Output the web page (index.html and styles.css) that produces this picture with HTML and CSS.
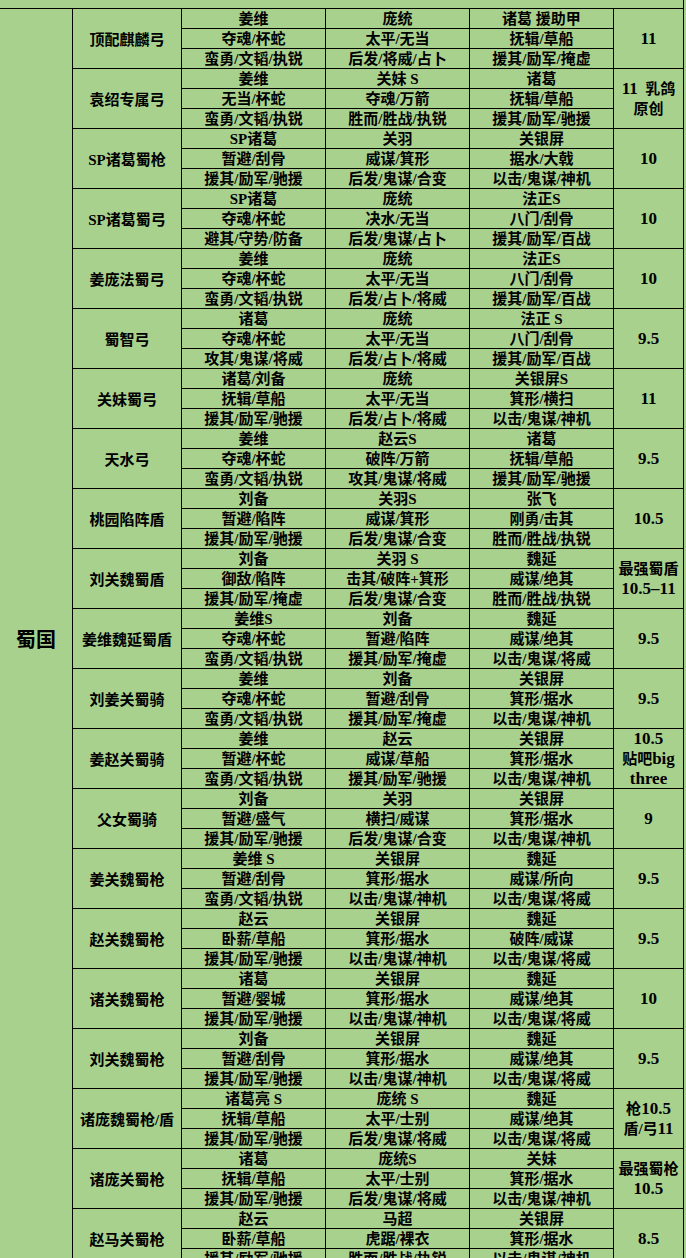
FILE: index.html
```html
<!DOCTYPE html>
<html lang="zh">
<head>
<meta charset="utf-8">
<title>蜀国阵容</title>
<link rel="stylesheet" href="styles.css">
</head>
<body>
<div class="sheet">
<div class="top"></div>
<div class="r">蜀国</div>

<div class="n">顶配麒麟弓</div>
<div class="c">姜维</div><div class="c">庞统</div><div class="c">诸葛 援助甲</div>
<div class="s"><p class="sv"><span class="num">11</span></p></div>
<div class="c">夺魂/杯蛇</div><div class="c">太平/无当</div><div class="c">抚辑/草船</div>
<div class="c">蛮勇/文韬/执锐</div><div class="c">后发/将威/占卜</div><div class="c">援其/励军/掩虚</div>

<div class="n">袁绍专属弓</div>
<div class="c">姜维</div><div class="c">关妹 S</div><div class="c">诸葛</div>
<div class="s"><p class="sv"><span class="num">11</span>&nbsp; 乳鸽<br>原创</p></div>
<div class="c">无当/杯蛇</div><div class="c">夺魂/万箭</div><div class="c">抚辑/草船</div>
<div class="c">蛮勇/文韬/执锐</div><div class="c">胜而/胜战/执锐</div><div class="c">援其/励军/驰援</div>

<div class="n">SP诸葛蜀枪</div>
<div class="c">SP诸葛</div><div class="c">关羽</div><div class="c">关银屏</div>
<div class="s"><p class="sv"><span class="num">10</span></p></div>
<div class="c">暂避/刮骨</div><div class="c">威谋/箕形</div><div class="c">据水/大戟</div>
<div class="c">援其/励军/驰援</div><div class="c">后发/鬼谋/合变</div><div class="c">以击/鬼谋/神机</div>

<div class="n">SP诸葛蜀弓</div>
<div class="c">SP诸葛</div><div class="c">庞统</div><div class="c">法正S</div>
<div class="s"><p class="sv"><span class="num">10</span></p></div>
<div class="c">夺魂/杯蛇</div><div class="c">决水/无当</div><div class="c">八门/刮骨</div>
<div class="c">避其/守势/防备</div><div class="c">后发/鬼谋/占卜</div><div class="c">援其/励军/百战</div>

<div class="n">姜庞法蜀弓</div>
<div class="c">姜维</div><div class="c">庞统</div><div class="c">法正S</div>
<div class="s"><p class="sv"><span class="num">10</span></p></div>
<div class="c">夺魂/杯蛇</div><div class="c">太平/无当</div><div class="c">八门/刮骨</div>
<div class="c">蛮勇/文韬/执锐</div><div class="c">后发/占卜/将威</div><div class="c">援其/励军/百战</div>

<div class="n">蜀智弓</div>
<div class="c">诸葛</div><div class="c">庞统</div><div class="c">法正 S</div>
<div class="s"><p class="sv"><span class="num">9.5</span></p></div>
<div class="c">夺魂/杯蛇</div><div class="c">太平/无当</div><div class="c">八门/刮骨</div>
<div class="c">攻其/鬼谋/将威</div><div class="c">后发/占卜/将威</div><div class="c">援其/励军/百战</div>

<div class="n">关妹蜀弓</div>
<div class="c">诸葛/刘备</div><div class="c">庞统</div><div class="c">关银屏S</div>
<div class="s"><p class="sv"><span class="num">11</span></p></div>
<div class="c">抚辑/草船</div><div class="c">太平/无当</div><div class="c">箕形/横扫</div>
<div class="c">援其/励军/驰援</div><div class="c">后发/占卜/将威</div><div class="c">以击/鬼谋/神机</div>

<div class="n">天水弓</div>
<div class="c">姜维</div><div class="c">赵云S</div><div class="c">诸葛</div>
<div class="s"><p class="sv"><span class="num">9.5</span></p></div>
<div class="c">夺魂/杯蛇</div><div class="c">破阵/万箭</div><div class="c">抚辑/草船</div>
<div class="c">蛮勇/文韬/执锐</div><div class="c">攻其/鬼谋/将威</div><div class="c">援其/励军/驰援</div>

<div class="n">桃园陷阵盾</div>
<div class="c">刘备</div><div class="c">关羽S</div><div class="c">张飞</div>
<div class="s"><p class="sv"><span class="num">10.5</span></p></div>
<div class="c">暂避/陷阵</div><div class="c">威谋/箕形</div><div class="c">刚勇/击其</div>
<div class="c">援其/励军/驰援</div><div class="c">后发/鬼谋/合变</div><div class="c">胜而/胜战/执锐</div>

<div class="n">刘关魏蜀盾</div>
<div class="c">刘备</div><div class="c">关羽 S</div><div class="c">魏延</div>
<div class="s"><p class="sv">最强蜀盾<br><span class="num">10.5–11</span></p></div>
<div class="c">御敌/陷阵</div><div class="c">击其/破阵+箕形</div><div class="c">威谋/绝其</div>
<div class="c">援其/励军/掩虚</div><div class="c">后发/鬼谋/合变</div><div class="c">胜而/胜战/执锐</div>

<div class="n">姜维魏延蜀盾</div>
<div class="c">姜维S</div><div class="c">刘备</div><div class="c">魏延</div>
<div class="s"><p class="sv"><span class="num">9.5</span></p></div>
<div class="c">夺魂/杯蛇</div><div class="c">暂避/陷阵</div><div class="c">威谋/绝其</div>
<div class="c">蛮勇/文韬/执锐</div><div class="c">援其/励军/掩虚</div><div class="c">以击/鬼谋/将威</div>

<div class="n">刘姜关蜀骑</div>
<div class="c">姜维</div><div class="c">刘备</div><div class="c">关银屏</div>
<div class="s"><p class="sv"><span class="num">9.5</span></p></div>
<div class="c">夺魂/杯蛇</div><div class="c">暂避/刮骨</div><div class="c">箕形/据水</div>
<div class="c">蛮勇/文韬/执锐</div><div class="c">援其/励军/掩虚</div><div class="c">以击/鬼谋/神机</div>

<div class="n">姜赵关蜀骑</div>
<div class="c">姜维</div><div class="c">赵云</div><div class="c">关银屏</div>
<div class="s"><p class="sv"><span class="num">10.5</span><br>贴吧<span class="num">big</span><br><span class="num">three</span></p></div>
<div class="c">暂避/杯蛇</div><div class="c">威谋/草船</div><div class="c">箕形/据水</div>
<div class="c">蛮勇/文韬/执锐</div><div class="c">援其/励军/驰援</div><div class="c">以击/鬼谋/神机</div>

<div class="n">父女蜀骑</div>
<div class="c">刘备</div><div class="c">关羽</div><div class="c">关银屏</div>
<div class="s"><p class="sv"><span class="num">9</span></p></div>
<div class="c">暂避/盛气</div><div class="c">横扫/威谋</div><div class="c">箕形/据水</div>
<div class="c">援其/励军/驰援</div><div class="c">后发/鬼谋/合变</div><div class="c">以击/鬼谋/神机</div>

<div class="n">姜关魏蜀枪</div>
<div class="c">姜维 S</div><div class="c">关银屏</div><div class="c">魏延</div>
<div class="s"><p class="sv"><span class="num">9.5</span></p></div>
<div class="c">暂避/刮骨</div><div class="c">箕形/据水</div><div class="c">威谋/所向</div>
<div class="c">蛮勇/文韬/执锐</div><div class="c">以击/鬼谋/神机</div><div class="c">以击/鬼谋/将威</div>

<div class="n">赵关魏蜀枪</div>
<div class="c">赵云</div><div class="c">关银屏</div><div class="c">魏延</div>
<div class="s"><p class="sv"><span class="num">9.5</span></p></div>
<div class="c">卧薪/草船</div><div class="c">箕形/据水</div><div class="c">破阵/威谋</div>
<div class="c">援其/励军/驰援</div><div class="c">以击/鬼谋/神机</div><div class="c">以击/鬼谋/将威</div>

<div class="n">诸关魏蜀枪</div>
<div class="c">诸葛</div><div class="c">关银屏</div><div class="c">魏延</div>
<div class="s"><p class="sv"><span class="num">10</span></p></div>
<div class="c">暂避/婴城</div><div class="c">箕形/据水</div><div class="c">威谋/绝其</div>
<div class="c">援其/励军/驰援</div><div class="c">以击/鬼谋/神机</div><div class="c">以击/鬼谋/将威</div>

<div class="n">刘关魏蜀枪</div>
<div class="c">刘备</div><div class="c">关银屏</div><div class="c">魏延</div>
<div class="s"><p class="sv"><span class="num">9.5</span></p></div>
<div class="c">暂避/刮骨</div><div class="c">箕形/据水</div><div class="c">威谋/绝其</div>
<div class="c">援其/励军/驰援</div><div class="c">以击/鬼谋/神机</div><div class="c">以击/鬼谋/将威</div>

<div class="n">诸庞魏蜀枪/盾</div>
<div class="c">诸葛亮 S</div><div class="c">庞统 S</div><div class="c">魏延</div>
<div class="s"><p class="sv">枪<span class="num">10.5</span><br>盾/弓<span class="num">11</span></p></div>
<div class="c">抚辑/草船</div><div class="c">太平/士别</div><div class="c">威谋/绝其</div>
<div class="c">援其/励军/驰援</div><div class="c">后发/鬼谋/将威</div><div class="c">以击/鬼谋/将威</div>

<div class="n">诸庞关蜀枪</div>
<div class="c">诸葛</div><div class="c">庞统S</div><div class="c">关妹</div>
<div class="s"><p class="sv">最强蜀枪<br><span class="num">10.5</span></p></div>
<div class="c">抚辑/草船</div><div class="c">太平/士别</div><div class="c">箕形/据水</div>
<div class="c">援其/励军/驰援</div><div class="c">后发/鬼谋/将威</div><div class="c">以击/鬼谋/神机</div>

<div class="n">赵马关蜀枪</div>
<div class="c">赵云</div><div class="c">马超</div><div class="c">关银屏</div>
<div class="s"><p class="sv"><span class="num">8.5</span></p></div>
<div class="c">卧薪/草船</div><div class="c">虎踞/裸衣</div><div class="c">箕形/据水</div>
<div class="c">援其/励军/驰援</div><div class="c">胜而/胜战/执锐</div><div class="c">以击/鬼谋/神机</div>
</div>
</body>
</html>
```

FILE: styles.css
```css
html, body {
  margin: 0;
  padding: 0;
  background: #a9d18e;
  overflow: hidden;
}

.sheet {
  display: grid;
  grid-template-columns: 72px 108px 143px 143px 143px 69px;
  grid-template-rows: 8px repeat(63, 19px);
  gap: 1px;
  width: 683px;
  background: #000;
  border-right: 1px solid #000;
  font-family: "Liberation Serif", "Noto Sans CJK SC", serif;
  font-weight: bold;
  font-size: 15px;
  color: #000;
}

.sheet > div {
  background: #a9d18e;
  display: flex;
  align-items: center;
  justify-content: center;
  text-align: center;
  white-space: nowrap;
}

.top {
  grid-column: 1 / -1;
}

.r {
  grid-column: 1;
  grid-row: 2 / span 63;
  font-size: 20px;
}

.n {
  grid-column: 2;
  grid-row: span 3;
}

.c {
  line-height: 19px;
  padding-top: 1px;
}

.s {
  grid-column: 6;
  grid-row: span 3;
}

.sv {
  margin: 0;
  line-height: 20px;
}

.num {
  font-size: 17px;
}
```
